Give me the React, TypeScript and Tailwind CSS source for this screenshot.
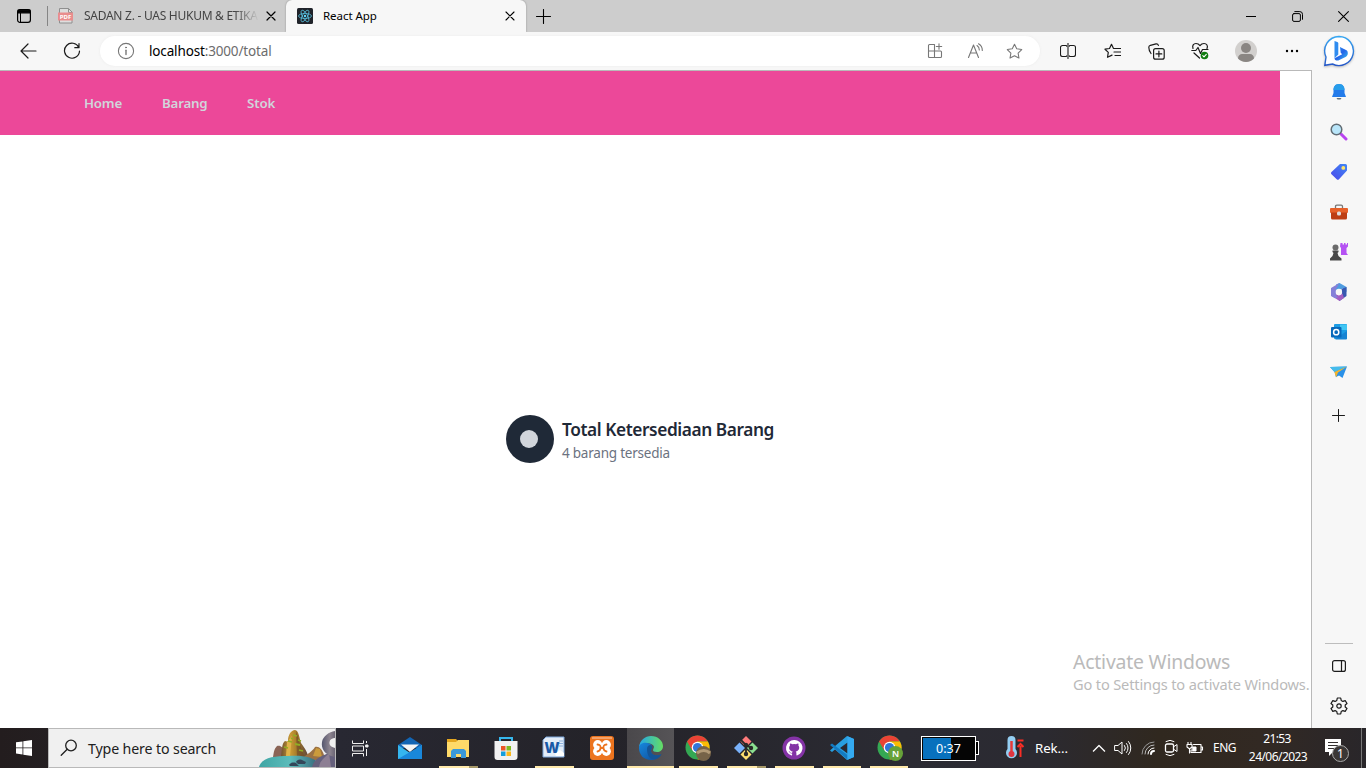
import React from "react";

type IconProps = { w?: number; h?: number; box?: string; className?: string; children: React.ReactNode };

function Icon({ w = 20, h = w, box = `0 0 ${w} ${h}`, className = "", children }: IconProps) {
  return (
    <svg width={w} height={h} viewBox={box} className={`block shrink-0 ${className}`} fill="none" stroke="currentColor" strokeLinecap="round" strokeLinejoin="round">
      {children}
    </svg>
  );
}

function Fill({ w = 24, h = w, box = `0 0 ${w} ${h}`, className = "", children }: IconProps) {
  return (
    <svg width={w} height={h} viewBox={box} className={`block shrink-0 ${className}`} fill="none">
      {children}
    </svg>
  );
}

function TabStrip() {
  return (
    <header className="flex h-8 shrink-0 bg-[#cdcdcd] text-black">
      <div className="flex w-[47px] items-center pl-4">
        <Icon w={16}>
          <rect x="1.6" y="1.6" width="12.8" height="12.8" rx="2.4" strokeWidth="1.2" />
          <path d="M2 2.2h12v2.6H2z" fill="currentColor" strokeWidth="1.2" />
          <path d="M4.5 5v9" strokeWidth="1" />
        </Icon>
      </div>
      <div className="mt-1.5 h-5 w-px bg-[#858585]" />
      <div className="flex w-[238px] items-center pl-[9px]">
        <Fill w={18}>
          <path d="M2.5 1.500h9l3.500 3.500v11h-12.500z" fill="#dedede" stroke="#8f8f8f" />
          <path d="M11.500 1.500v4h4" stroke="#8f8f8f" />
          <rect x="1" y="5.500" width="15" height="8" fill="#e98d8d" />
          <text x="8.500" y="12" textAnchor="middle" fill="white" fontSize="6" fontWeight="700" fontFamily="Noto Sans, sans-serif">PDF</text>
        </Fill>
        <span className="ml-[9px] w-[175px] overflow-hidden text-[12px] tracking-[-0.27px] whitespace-nowrap text-[#444] [mask-image:linear-gradient(to_right,black_86%,transparent)]">SADAN Z. - UAS HUKUM &amp; ETIKA</span>
        <Icon w={10} className="ml-[7px]"><path d="M1 1l8 8M9 1l-8 8" strokeWidth="1.200" /></Icon>
      </div>
      <div className="flex w-60 items-center rounded-t-md bg-[#f7f7f7] pl-[11px] shadow-[0_0_2px_#888]">
        <Fill w={16}>
          <rect width="16" height="16" rx="1.500" fill="#20232a" />
          <g stroke="#61dafb" strokeWidth=".8" opacity=".85">
            <ellipse cx="8" cy="8" rx="6.500" ry="2.500" />
            <ellipse cx="8" cy="8" rx="6.500" ry="2.500" transform="rotate(60 8 8)" />
            <ellipse cx="8" cy="8" rx="6.500" ry="2.500" transform="rotate(120 8 8)" />
          </g>
          <circle cx="8" cy="8" r="1.200" fill="#61dafb" />
        </Fill>
        <span className="ml-2.5 w-[182px] text-[11.500px] tracking-[-0.05px] whitespace-nowrap">React App</span>
        <Icon w={10}><path d="M1 1l8 8M9 1l-8 8" strokeWidth="1.100" /></Icon>
      </div>
      <div className="flex w-[34px] items-center justify-center">
        <Icon w={15}><path d="M7.500.5v14M.5 7.500h14" strokeWidth="1.100" /></Icon>
      </div>
      <div className="flex-1" />
      <div className="flex w-[46px] items-center justify-center"><Icon w={10}><path d="M0 5.500h10" strokeWidth="1" strokeLinecap="butt" /></Icon></div>
      <div className="flex w-[46px] items-center justify-center">
        <Icon w={11}>
          <rect x=".6" y="2.600" width="7.800" height="7.800" rx="1.400" />
          <path d="M2.800.6h5a2.700 2.700 0 0 1 2.700 2.700v5" />
        </Icon>
      </div>
      <div className="flex w-[46px] items-center justify-center"><Icon w={11}><path d="M.6.6l9.800 9.800M10.400.6L.6 10.400" strokeWidth="1.100" /></Icon></div>
    </header>
  );
}

const STAR = "M8 1.200l2.100 4.300 4.700.7-3.400 3.300.8 4.700L8 12l-4.200 2.200.8-4.700L1.200 6.200l4.700-.7z";

function Toolbar() {
  return (
    <div className="flex h-[38px] shrink-0 items-center bg-[#f7f7f7] text-[#1b1b1b]">
      <div className="flex w-[50px] justify-end pr-[13px]"><Icon w={17}><path d="M16 8H1.200M8 1L1 8l7 7" strokeWidth="1.200" /></Icon></div>
      <div className="flex w-[50px] pl-[13px]">
        <Icon w={18}><path d="M15.800 5.500A7.500 7.500 0 1 0 16.500 9M16 1.500v4.200h-4.200" strokeWidth="1.200" /></Icon>
      </div>
      <div className="flex h-[30px] w-[940px] items-center rounded-full bg-white pl-[17px] shadow-[0_0_3px_#ececec]">
        <Icon w={18} className="text-[#777]">
          <circle cx="9" cy="9" r="7.600" strokeWidth="1.100" />
          <path d="M9 8.200v4.300" strokeWidth="1.400" /><circle cx="9" cy="5.500" r=".5" fill="currentColor" />
        </Icon>
        <span className="ml-3.5 w-[771px] text-[13.500px] tracking-[-0.15px] whitespace-nowrap text-[#6c6c6c]"><span className="text-black">localhost</span>:3000/total</span>
        <div className="flex w-[40px] pl-[7px] text-[#777]">
          <Icon w={16}><path d="M1.500 14V2.500a1 1 0 0 1 1-1H7.500V14.500H2.500a1 1 0 0 1-1-1M1.500 8h12a1 1 0 0 1 1 1v4.500a1 1 0 0 1-1 1h-6M12 .8v5.400M9.300 3.500h5.400" strokeWidth="1.100" /></Icon>
        </div>
        <div className="flex w-[40px] pl-[7px] text-[#777]">
          <Icon w={17}><path d="M1.500 14.500L6.500 2l5 12.500M3.300 10h6.400M10 2.500a5 5 0 0 1 2.300 4.500M11.500.8A7.500 7.500 0 0 1 15.300 7.500" strokeWidth="1.100" /></Icon>
        </div>
        <div className="flex w-[30px] pl-1.5 text-[#777]"><Icon w={17} box="0 0 16 16"><path d={STAR} /></Icon></div>
      </div>
      <div className="ml-1.5 flex w-11 justify-center">
        <Icon w={16}><path d="M6 2.500H2.500a2 2 0 0 0-2 2v7a2 2 0 0 0 2 2H6M10 2.500h3.500a2 2 0 0 1 2 2v7a2 2 0 0 1-2 2H10M6 2.500q.7 0 .7.700M6 13.500q.7 0 .7-.7M10 2.500q-.7 0-.7.700M10 13.500q-.7 0-.7-.7" strokeWidth="1.100" /><path d="M8 .5v15" strokeWidth="1.100" /></Icon>
      </div>
      <div className="flex w-11 justify-center">
        <Icon w={17} h={16}><path d="M10.500 5.500L9.400 5.300 7.500 1.300 5.500 5.500 1 6.200l3.300 3.200-.8 4.900L8 12.100M10.500 5.500h6M10 9h6.500M11 12.500h5.500" strokeWidth="1.200" /></Icon>
      </div>
      <div className="flex w-11 justify-center">
        <Icon w={17}><rect x="5.600" y="5.600" width="10.600" height="10.600" rx="2" strokeWidth="1.200" /><path d="M10.900 8v5.800M8 10.900h5.800M3 10.500C1.500 8.500.8 6 .8 4.200c0-1 .7-1.600 1.600-1.900L8 .9c1-.2 2 .3 2.400 1.500" strokeWidth="1.200" /></Icon>
      </div>
      <div className="flex w-11 justify-center">
        <Icon w={18}>
          <path d="M2 6.500C1 3.500 2.500 1.500 5 1.500c1.800 0 3 .8 4 2.200 1-1.400 2.200-2.200 4-2.200 2.700 0 4.200 2.500 3 5M.8 8.500h4L7 5.500l2.500 6 2-4h5.500M3 11l5.500 5" strokeWidth="1.200" />
          <circle cx="13.500" cy="13.500" r="3.800" fill="#107c10" stroke="none" /><path d="M11.800 13.600l1.200 1.200 2.300-2.500" stroke="white" strokeWidth="1.100" />
        </Icon>
      </div>
      <div className="flex w-12 justify-center">
        <Fill w={22}><circle cx="11" cy="11" r="11" fill="#d2d0ce" /><circle cx="11" cy="8" r="5" fill="#8a8683" /><path d="M3 18.500c0-3 2-4.500 4-4.500h8c2 0 4 1.500 4 4.500A11 11 0 0 1 3 18.500z" fill="#8a8683" /></Fill>
      </div>
      <div className="flex w-11 justify-center"><Fill w={14} h={4}><g fill="black"><circle cx="2" cy="2" r="1.200" /><circle cx="7" cy="2" r="1.200" /><circle cx="12" cy="2" r="1.200" /></g></Fill></div>
      <div className="flex w-[50px] justify-center">
        <Fill w={32} className="drop-shadow-[0_1px_1px_#bbb]">
          <defs>
            <linearGradient id="bingRing" x1="0" y1="0" x2="0" y2="1"><stop stopColor="#35a7f3" /><stop offset="1" stopColor="#2759c9" /></linearGradient>
            <linearGradient id="bingMark" x1="0" y1="0" x2="1" y2="1"><stop stopColor="#2f9cf5" /><stop offset=".5" stopColor="#2464e8" /><stop offset="1" stopColor="#35c5f0" /></linearGradient>
          </defs>
          <path d="M16 1.500A14.500 14.500 0 1 1 9.500 29L1.800 30.300 3 22A14.500 14.500 0 0 1 16 1.500z" fill="white" stroke="url(#bingRing)" strokeWidth="1.400" />
          <path d="M11.500 6l2.800 1q1 .4 1 1.500v11l-3.800 3.700z" fill="#2f8cf0" />
          <path d="M17 12l6.500 3.300c1 .6 1.300 1.700 1.300 3 0 1.700-.7 2.700-1.800 3.400L15.300 25.500c-2 .5-3.800-.8-3.800-2.300l7.700-4-1.500-1.500z" fill="url(#bingMark)" />
        </Fill>
      </div>
    </div>
  );
}

function PageContent() {
  return (
    <main className="relative flex-1 overflow-hidden bg-white">
      <nav className="flex h-16 w-[1280px] items-center gap-10 bg-[#ec4899] pt-0.5 pl-[84px] text-[13.300px] font-semibold text-[#d1d5db]">
        <span className="w-[38px] tracking-[-0.2px] whitespace-nowrap">Home</span>
        <span className="w-[45px] tracking-[-0.2px] whitespace-nowrap">Barang</span>
        <span className="w-[28px] tracking-[-0.1px] whitespace-nowrap">Stok</span>
      </nav>
      <section className="flex h-[608px] w-[1280px] items-center justify-center gap-2">
        <div className="flex size-12 items-center justify-center rounded-full bg-[#1f2937]"><div className="mr-0.5 size-[18px] rounded-full bg-[#d1d5db]" /></div>
        <div className="w-[212px] whitespace-nowrap">
          <h1 className="pt-0.5 text-[17.300px] leading-[26px] font-semibold tracking-[-0.42px] text-[#1f2937]">Total Ketersediaan Barang</h1>
          <p className="text-[13.500px] leading-5 tracking-[-0.22px] text-[#6b7280]">4 barang tersedia</p>
        </div>
      </section>
      <aside className="absolute top-[577px] left-[1073px] whitespace-nowrap text-[#bababa]">
        <p className="text-[19.400px] leading-7 tracking-[-0.2px]">Activate Windows</p>
        <p className="text-[14.600px] leading-4 tracking-[-0.15px]">Go to Settings to activate Windows.</p>
      </aside>
    </main>
  );
}

function Sidebar() {
  const apps = [
    <Fill w={16} h={18}><path d="M8 1c4 0 5.500 3 5.500 6v3L15 14H1l1.500-4V7c0-3 1.500-6 5.500-6z" fill="#237bea" /><path d="M8 1c4 0 5.500 3 5.500 6H2.500C2.500 4 4 1 8 1z" fill="#279dea" /><path d="M5.500 15h5l-1 1.500h-3z" fill="#65717c" /></Fill>,
    <Fill w={18}><path d="M11 11l5 5" stroke="#b844f0" strokeWidth="3" strokeLinecap="round" /><circle cx="6.500" cy="6.500" r="5.300" fill="#b9e6fa" stroke="#626d75" strokeWidth="1.500" /></Fill>,
    <Fill w={18}><defs><linearGradient id="tagBlue" x1="1" y1="0" x2="0" y2="1"><stop stopColor="#4087f5" /><stop offset="1" stopColor="#4b48ea" /></linearGradient></defs><path d="M10 1h5.500A1.500 1.500 0 0 1 17 2.500v5l-8 8.800c-.7.7-1.600.7-2.300 0L1.500 11.300c-.7-.7-.6-1.600 0-2.200z" fill="url(#tagBlue)" /><circle cx="13.300" cy="4.900" r="1.900" fill="#ffe56a" /></Fill>,
    <Fill w={18}><path d="M5.500 6V3.500c0-.8.500-1.300 1.300-1.300h4.400c.8 0 1.300.5 1.300 1.300V6" stroke="#777" strokeWidth="1.300" /><rect y="5" width="18" height="5" rx="1" fill="#e66029" /><path d="M1 9.500h16V15a1.500 1.500 0 0 1-1.500 1.500h-13A1.500 1.500 0 0 1 1 15z" fill="#bd3e14" /><rect x="7" y="8.500" width="4" height="4" rx="1.500" fill="#ddd" /></Fill>,
    <Fill w={18} h={20}><path d="M10.500 1h2v1.500H14V1h1.500v1.500H17V1h1v3.500L16.500 6v5l1.500 2h-7V6l-1-1.500z" fill="#b552f3" /><circle cx="5.500" cy="5.500" r="3" fill="#6b6b6b" /><path d="M2.500 8.500h6v1.500l-1 1 1 3 3 2.500v2H0v-2L2.500 14l1-3-1-1z" fill="#484848" /></Fill>,
    <Fill w={18}>
      <path d="M6 1.500L9.500 0l7 4v5l-4-3.500L6 9z" fill="#4f9ce0" />
      <path d="M16.500 4v9l-7 5-2-3.500 4-3V6z" fill="#3858b0" />
      <path d="M1 12.500l5-1.500 3 1.500 3.500-2L14 15l-4.500 3z" fill="#a35fc2" />
      <path d="M9.500 0L6 6v6l2 2.500-3 .8L1 13V5z" fill="#8580d8" />
      <circle cx="8.900" cy="9" r="3.200" fill="#f7f7f7" />
    </Fill>,
    <Fill w={18} h={16}><rect x="4" width="13" height="15" rx="1" fill="#1c9ce4" /><path d="M10 .5h7V6h-7z" fill="#41c6f3" /><path d="M5 15l12-8v7.500a1 1 0 0 1-1 1H6z" fill="#1683d3" /><rect x="1" y="3" width="10.500" height="10.500" rx="1" fill="#0869bb" /><circle cx="6.200" cy="8.200" r="2.600" stroke="white" strokeWidth="1.500" /></Fill>,
    <Fill w={18} h={16}><path d="M0 3l17-.5L12.500 14 9 11.500 6 13 4.500 8z" fill="#2a91e8" /><path d="M0 3l17-.5L4.500 8z" fill="#45bceb" /><path d="M17 2.500L4.500 8 6 13.500l2-5z" fill="#f6b52c" /></Fill>,
  ];
  return (
    <aside className="flex w-[55px] flex-col items-center border-l border-[#b9b9b9] bg-[#f7f7f7] pt-px text-[#1b1b1b]">
      {apps.map((app, i) => <div key={i} className="flex h-10 items-center">{app}</div>)}
      <div className="mt-[3px] mr-px flex h-10 items-center"><Icon w={13}><path d="M6.500.5v12M.5 6.500h12" strokeWidth="1" /></Icon></div>
      <div className="flex-1" />
      <div className="mb-0.5 h-px w-7 bg-[#bdbdbd]" />
      <div className="flex h-10 items-center"><Icon w={14} h={12}><rect x=".6" y=".6" width="12.800" height="10.800" rx="2" strokeWidth="1.200" /><path d="M9.500.6v10.800" strokeWidth="1.200" /></Icon></div>
      <div className="mb-0.5 flex h-10 items-center">
        <Icon w={18} box="0 0 18 18"><path d="M7.300 1h3.400l.5 2.400 1.700 1 2.300-.8L17 6.500 15.200 8v2l1.800 1.500-1.800 2.900-2.300-.8-1.700 1-.5 2.400H7.300l-.5-2.400-1.700-1-2.300.8L1 11.500 2.800 10V8L1 6.500l1.800-2.900 2.300.8 1.700-1z" strokeWidth="1.200" /><circle cx="9" cy="9" r="2.200" strokeWidth="1.200" /></Icon>
      </div>
    </aside>
  );
}

function Chrome({ children }: { children: React.ReactNode }) {
  return (
    <Fill w={26}>
      <circle cx="12.500" cy="12.500" r="12" fill="#34a853" />
      <path d="M2.100 6.500A12 12 0 0 1 22.900 6.500H12.500L7.300 15.500z" fill="#ea4335" />
      <path d="M22.900 6.500A12 12 0 0 1 12.500 24.500L17.700 15.500 12.500 6.500z" fill="#fbbc05" />
      <circle cx="12.500" cy="12.500" r="5.800" fill="white" /><circle cx="12.500" cy="12.500" r="4.600" fill="#3276d9" />
      {children}
    </Fill>
  );
}

function Task({ children, bar = "", active = false }: { children: React.ReactNode; bar?: string; active?: boolean }) {
  return (
    <div className={`flex h-10 flex-col items-center ${active ? "ml-px w-[47px] bg-gradient-to-r from-[#4a484b] to-[#565457]" : "w-12"}`}>
      <div className="flex h-[38px] items-center pt-0.5">{children}</div>
      <div className={`h-0.5 ${bar}`} />
    </div>
  );
}

function Taskbar() {
  return (
    <footer className="flex h-10 shrink-0 items-center bg-[linear-gradient(to_right,#231d1e_0,#282832_340px,#242329_600px,#2b2b33_900px,#2b2a31_1040px,#30281f_1160px,#322923_1260px,#29262a_1366px)] text-white">
      <div className="flex w-12 justify-center"><Fill w={16}><path d="M0 2.300L6.500 1.400V7.500H0zM7.300 1.300L16 0v7.500H7.300zM0 8.300h6.500v6.200L0 13.600zM7.300 8.300H16V16l-8.700-1.300z" fill="white" /></Fill></div>
      <div className="flex h-10 w-72 items-center border border-[#b9b9b9] bg-[#f0f0f0] pl-[11px] text-[#202020]">
        <Icon w={18}><circle cx="11" cy="6.500" r="5.300" strokeWidth="1.300" /><path d="M7.200 10.300L1.200 16.300" strokeWidth="1.300" /></Icon>
        <span className="ml-2.5 w-[171px] pt-0.5 text-[14.200px] tracking-[-0.13px] whitespace-nowrap">Type here to search</span>
        <Fill w={77} h={38}>
          <defs>
            <linearGradient id="rock" x1="0" x2="1"><stop stopColor="#705331" /><stop offset=".35" stopColor="#c99a35" /><stop offset=".6" stopColor="#a57a2a" /><stop offset="1" stopColor="#5d473b" /></linearGradient>
            <linearGradient id="lagoon" x1="0" y1="0" x2="1" y2="0"><stop stopColor="#3fa5a4" /><stop offset=".5" stopColor="#5cbcbb" /><stop offset="1" stopColor="#315d72" /></linearGradient>
            <linearGradient id="arch" x1="0" x2="1"><stop stopColor="#55566e" /><stop offset=".6" stopColor="#8d8590" /><stop offset="1" stopColor="#6c6675" /></linearGradient>
          </defs>
          <path d="M15 28c1-5 1-8 4-11 4-1 6 2 7 5l1 6z" fill="#8a6456" />
          <path d="M23 28c1-8 1-14 4-16 1 0 2 1 3 0 0-6 3-11 7-11 4 1 4 7 6 13 2 3 7 9 7 14z" fill="url(#rock)" />
          <path d="M38 2c3 7 3 14 9 26h-8z" fill="#704c26" opacity=".65" />
          <path d="M29 13l5-6-2 20h-4z" fill="#dfb34a" />
          <path d="M46 28c4-4 8-5 11-10 4-1 7 2 9 8v5H46z" fill="#9c7244" />
          <path d="M55 27l3-8 4 1 2 8z" fill="#cb9b3c" />
          <path d="M1 38C4 28 17 27 30 27c16-1 28 1 34 11z" fill="url(#lagoon)" />
          <path d="M77 20c-8 7-20 6-23 18h23z" fill="#66617d" />
          <path d="M71 24c-4 5-9 7-10 14h12z" fill="#8d7f94" />
          <path d="M77 2c-6 1-12 5-13 11s2 13 13 15v-9c-4-1-6-3-5.500-6s3-4 5.500-4z" fill="url(#arch)" />
          <path d="M38 33c1-2 3-3 6-2l4 2-1 2h-7zM31 36c1-2 4-3 7-2l3 3h-9z" fill="#34475a" />
          <path d="M35 6l4 1M30 12l4 1M40 11l3 1M37 15l5 1M26 18l4 1M41 21l4 1M33 9l2 1" stroke="#91ad24" strokeWidth="1.800" />
        </Fill>
      </div>
      <div className="flex w-[50px] pl-4">
        <Icon w={17} className="text-[#eee]"><path d="M.5.5v3h11v-3M.5 16.500v-3h11v3M.5 6h11v5H.5zM14.500 1v2M14.500 9v7" strokeLinecap="butt" /><rect x="14" y="5" width="2" height="2" fill="currentColor" /></Icon>
      </div>
      <Task><Fill w={24}><path d="M0 9L12 1l12 8v3H0z" fill="#1265b4" /><path d="M3 8.500h18L12 16z" fill="#f4f5f5" /><path d="M0 9l12 8L24 9v14H0z" fill="#35b6ef" /><path d="M0 23L24 9v14z" fill="#1988db" /></Fill></Task>
      <Task bar="w-[39px] ml-px bg-[linear-gradient(to_right,#ffe9aa_30px,#a79969_30px)]"><Fill w={22}><path d="M0 2h9l2 2h11v16H0z" fill="#e5a720" /><path d="M0 5h9l2-2h11v17H0z" fill="#ffda69" /><path d="M4 20v-6l2-2h11l2 2v7h-5v-4H9v4H4z" fill="#3b99da" /></Fill></Task>
      <Task><Fill w={24}><path d="M6 6V2h12v4" stroke="#36b7ed" strokeWidth="2" /><path d="M.5 5h23v16a3 3 0 0 1-3 3h-17a3 3 0 0 1-3-3z" fill="#f1f1f1" /><path d="M7 10h4.500v4.500H7z" fill="#eb5527" /><path d="M12.500 10H17v4.500h-4.500z" fill="#7fba21" /><path d="M7 15.500h4.500V20H7z" fill="#159edb" /><path d="M12.500 15.500H17V20h-4.500z" fill="#fbb719" /></Fill></Task>
      <Task bar="w-[39px] ml-px bg-[#ffe9aa]">
        <Fill w={24}>
          <path d="M4 1h18v20H1V4z" fill="#e3edf8" stroke="#7ea8dc" />
          <path d="M17 5h4M17 7.500h4M17 10h4" stroke="#8fb2de" />
          <text x="10" y="16.500" textAnchor="middle" fill="#1859a6" fontSize="16" fontWeight="900" fontFamily="Noto Sans, sans-serif" textLength="15" lengthAdjust="spacingAndGlyphs">W</text>
          <path d="M13 18l5-4 4 3v3h-8z" fill="white" />
        </Fill>
      </Task>
      <Task>
        <Fill w={24}>
          <rect width="24" height="24" rx="3" fill="#ec741e" /><path d="M2 1h20v2H2z" fill="#f3a26a" />
          <g fill="white"><circle cx="7.700" cy="8.700" r="4.600" /><circle cx="16.300" cy="8.700" r="4.600" /><circle cx="7.700" cy="15.300" r="4.600" /><circle cx="16.300" cy="15.300" r="4.600" /><path d="M8 9h8v6H8z" /></g>
          <path d="M7.500 8.500q3.500.3 3 3.500-.2 3-3 3.500M16.500 8.500q-3.500.3-3 3.500.2 3 3 3.500M10.500 12h3" stroke="#ec741e" strokeWidth="1.800" strokeLinecap="round" />
        </Fill>
      </Task>
      <Task active bar="w-[47px] bg-[#ffe9aa]">
        <Fill w={24}>
          <defs><linearGradient id="edgeTop" x1="0" x2="1"><stop stopColor="#23a6e9" /><stop offset="1" stopColor="#65de62" /></linearGradient><linearGradient id="edgeLow" x1="0" y1="0" x2="1" y2="1"><stop stopColor="#1687dd" /><stop offset="1" stopColor="#114b96" /></linearGradient></defs>
          <path d="M0 11C1 4 6 0 12 0c7 0 12 5 12 10 0 4-3 6-6 6s-4-1-4-2l1-3C14 6 3 6 0 11z" fill="url(#edgeTop)" />
          <path d="M0 12c0-6 10-7 13-2 1 2-1 3-1 5 0 4 6 6 10.500 3-2 4-5.500 6-10.500 6C5 24 0 19 0 12z" fill="url(#edgeLow)" />
          <path d="M8 13c0-4 4-5 5-3 1 2-1 3-1 5 0 4 6 6 10.500 3-2 4-5.500 5-8.500 5-4 0-6-5-6-10z" fill="#155597" />
        </Fill>
      </Task>
      <Task bar="w-[39px] ml-px bg-[#ffe9aa]"><Chrome><circle cx="18.500" cy="18.500" r="7.500" fill="#766348" /><path d="M12 18q7-5 13 0" stroke="#b29a76" strokeWidth="3" /></Chrome></Task>
      <Task bar="w-[39px] ml-px bg-[linear-gradient(to_right,#ffe9aa_30px,#a79969_30px)]">
        <Fill w={24}>
          <path d="M12 0l5.500 5.500L12 11 6.500 5.500z" fill="#ff7b7b" /><path d="M5.500 6.500L11 12l-5.500 5.500L0 12z" fill="#79b1fa" /><path d="M18.500 6.500L24 12l-5.500 5.500L13 12z" fill="#8bdf90" /><path d="M12 13l5.500 5.500L12 24l-5.500-5.500z" fill="#ffe070" />
          <path d="M7 4l5 5v9M12 9l5 3" stroke="#292828" strokeWidth="1.800" /><g fill="#292828"><circle cx="12" cy="9" r="2.200" /><circle cx="12" cy="18" r="2.200" /><circle cx="17" cy="12" r="2.200" /></g>
        </Fill>
      </Task>
      <Task bar="w-[39px] ml-px bg-[#ffe9aa]"><Fill w={24}><circle cx="12" cy="12" r="11.500" fill="#8433a6" /><path d="M12 4a8 8 0 0 0-2.500 15.600c.5.100.6-.2.600-.5v-1.700c-2 .4-2.500-.9-2.800-1.300-.2-.4-.6-.6-.9-.8.9-.2 1.400.4 1.700.9.500.8 1.300.9 2 .6.100-.6.400-1 .6-1.200-3.700-.5-4.300-4.200-2.700-6-.2-.6-.2-1.400.1-2.100 1-.1 1.700.5 2.200.8a8 8 0 0 1 3.800 0c.5-.3 1.200-.9 2.200-.8.300.7.300 1.500.1 2.100 1.600 1.800 1 5.500-2.700 6 .5.500.7 1 .7 2v1.500c0 .3.100.6.600.5A8 8 0 0 0 12 4z" fill="white" /></Fill></Task>
      <Task bar="w-[38px] bg-[#ffe9aa]"><Fill w={24}><path d="M17 0l7 3v18l-7 3L5 13.500 2 16l-2-1.500L5 10 17 0zM17.500 6.500L10 12l7.500 5.500z" fill="#289fe0" fillRule="evenodd" /><path d="M0 9l2-1.500L17.500 19v4.500z" fill="#147bc2" /><path d="M17.500.2L24 3v18l-6.500 2.800z" fill="#34aaf1" /></Fill></Task>
      <Task bar="w-[38px] ml-[-2px] bg-[#ffe9aa]"><Chrome><circle cx="18.500" cy="18.500" r="7.500" fill="#66a239" /><text x="18.500" y="22" textAnchor="middle" fill="white" fontSize="9" fontWeight="600" fontFamily="Noto Sans, sans-serif">N</text></Chrome></Task>
      <div className="ml-[7px] flex h-[25px] w-[55px] items-center justify-center border border-white bg-[linear-gradient(to_right,#0871bd_29px,#050505_29px)] pt-0.5 text-[12.500px] shadow-[inset_0_0_0_1px_#050505]"><span>0:37</span></div>
      <div className="h-3.5 w-[3px] border border-l-0 border-white bg-black" />
      <Fill w={20} h={24} className="ml-[26px]"><path d="M2.500 4a4 4 0 0 1 8 0v9a5.500 5.500 0 1 1-8 0z" fill="#94cef2" /><path d="M6.500 5v13" stroke="#e73938" strokeWidth="2.500" /><circle cx="6.500" cy="18" r="3" fill="#df3540" /><path d="M15.500 21V10M12.500 11l3-3 3 3M12.500 4.500h6" stroke="#fb2d25" strokeWidth="2" /></Fill>
      <span className="ml-2.5 w-[57px] pt-0.5 text-[13.300px] tracking-[-0.1px] whitespace-nowrap">Rek...</span>
      <Icon w={14} h={8}><path d="M1.500 7L7 1.500 12.500 7" strokeWidth="1.300" strokeLinecap="square" /></Icon>
      <Icon w={18} h={16} className="ml-2"><path d="M1 5.500h3L8 2v12l-4-3.500H1zM10.500 5.500a4 4 0 0 1 0 5M12.500 3.500a7 7 0 0 1 0 9M14.500 1.500a10 10 0 0 1 0 13" strokeWidth="1" /></Icon>
      <Icon w={14} className="ml-[9px]"><g strokeWidth="1"><path d="M1 13A12 12 0 0 1 13 1" stroke="#999" /><path d="M4 13A9 9 0 0 1 13 4" stroke="#bbb" /><path d="M7 13A6 6 0 0 1 13 7" /><path d="M10 13a3 3 0 0 1 3-3" strokeWidth="2" /></g></Icon>
      <Icon w={14} h={18} className="ml-[9px]"><path d="M2 2.500q4-2.500 8 0M2 15.500q4 2.500 8 0M10 7.500l3-2v7l-3-2" /><rect x="1.500" y="5" width="8" height="8" rx="1.500" strokeWidth="1.300" /></Icon>
      <Icon w={18} h={12} className="ml-2"><path d="M7.500 2.500H15v8H5V8M15 5h1.500v3H15M2 0v2M5 0v2M1 2.500h5V5L4 6.500H3L1 5zM3.500 7v4" strokeWidth="1.100" /><path d="M6.500 5H10v4H6.500z" fill="currentColor" /></Icon>
      <span className="ml-[9px] w-[29px] text-[12px] tracking-[-0.5px] whitespace-nowrap">ENG</span>
      <div className="flex w-[72px] flex-col items-center text-[12px] leading-[18px] whitespace-nowrap"><span className="pr-0.5 tracking-[-0.6px]">21:53</span><span className="tracking-[-0.55px]">24/06/2023</span></div>
      <Fill w={28} h={26} className="mt-1 ml-[10px]"><path d="M1 2h16v13H9l-4 4v-4H1z" fill="white" /><path d="M4 5.500h10M4 8.500h10M4 11.500h7" stroke="#343030" /><circle cx="16.500" cy="16.500" r="8" fill="#3b3736" stroke="#aaa" /><text x="16.500" y="21" textAnchor="middle" fontSize="12" fill="white" fontFamily="Noto Sans, sans-serif">1</text></Fill>
      <div className="ml-auto mr-1 h-10 w-px bg-[#777]" />
    </footer>
  );
}

export default function App() {
  return (
    <div className="flex h-[768px] w-[1366px] flex-col overflow-hidden font-['Noto_Sans',sans-serif]">
      <TabStrip />
      <Toolbar />
      <div className="flex h-px shrink-0"><div className="w-[1312px] bg-[#b9b9b9]" /><div className="flex-1 bg-[#f7f7f7]" /></div>
      <div className="flex min-h-0 flex-1"><PageContent /><Sidebar /></div>
      <Taskbar />
    </div>
  );
}
